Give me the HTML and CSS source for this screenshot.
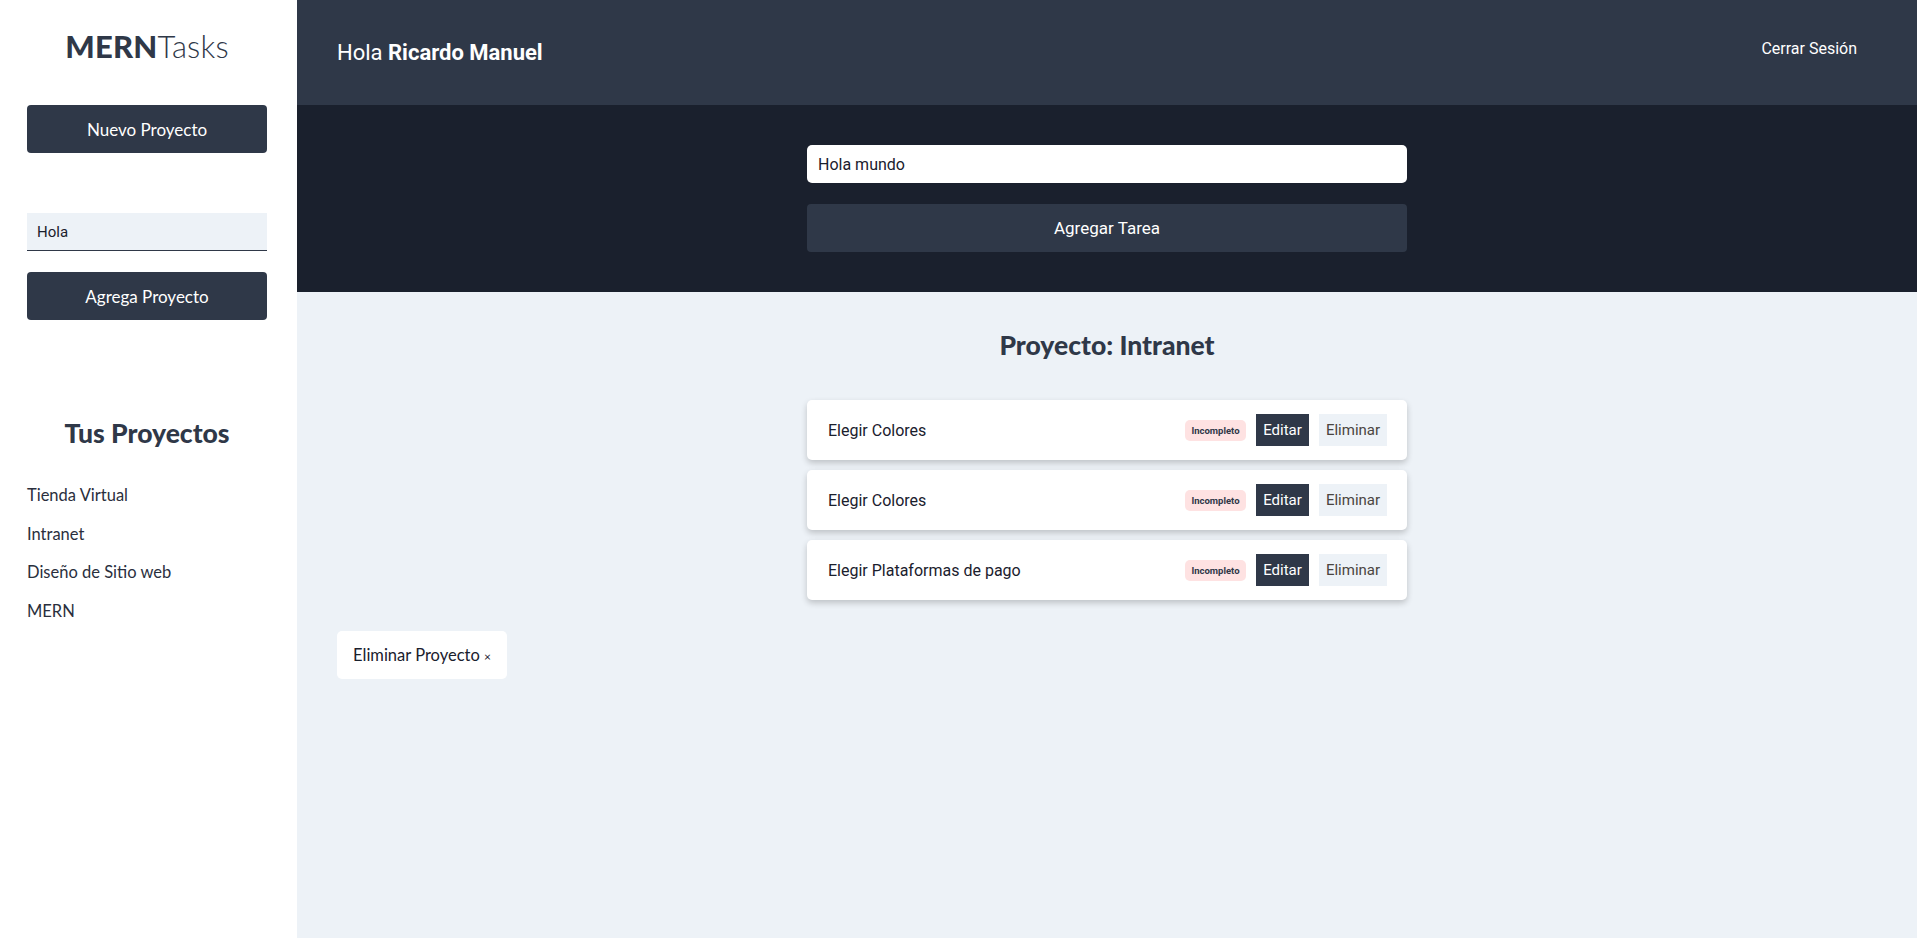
FILE: index.html
```html
<!DOCTYPE html>
<html lang="es">
<head>
<meta charset="utf-8">
<title>MERNTasks</title>
<link rel="stylesheet" href="styles.css">
</head>
<body>
<div class="app">
  <aside class="sidebar">
    <h1 class="logo"><span class="logo-bold">MERN</span>Tasks</h1>
    <button class="btn-primary">Nuevo Proyecto</button>
    <form class="new-project">
      <input class="input-text" type="text" value="Hola">
      <button class="btn-primary" type="button">Agrega Proyecto</button>
    </form>
    <div class="projects">
      <h2 class="projects-title">Tus Proyectos</h2>
      <ul class="project-list">
        <li>Tienda Virtual</li>
        <li>Intranet</li>
        <li>Diseño de Sitio web</li>
        <li>MERN</li>
      </ul>
    </div>
  </aside>
  <div class="main">
    <header class="topbar">
      <p class="greeting">Hola <strong>Ricardo Manuel</strong></p>
      <nav class="nav"><a class="logout">Cerrar Sesión</a></nav>
    </header>
    <section class="task-form">
      <div class="task-form-inner">
        <input class="task-input" type="text" value="Hola mundo">
        <button class="btn-task" type="button">Agregar Tarea</button>
      </div>
    </section>
    <section class="tasks">
      <h2 class="tasks-title">Proyecto: Intranet</h2>
      <ul class="task-list">
        <li class="task">
          <p class="task-name">Elegir Colores</p>
          <div class="task-actions">
            <span class="badge">Incompleto</span>
            <button class="btn-edit">Editar</button>
            <button class="btn-delete">Eliminar</button>
          </div>
        </li>
        <li class="task">
          <p class="task-name">Elegir Colores</p>
          <div class="task-actions">
            <span class="badge">Incompleto</span>
            <button class="btn-edit">Editar</button>
            <button class="btn-delete">Eliminar</button>
          </div>
        </li>
        <li class="task">
          <p class="task-name">Elegir Plataformas de pago</p>
          <div class="task-actions">
            <span class="badge">Incompleto</span>
            <button class="btn-edit">Editar</button>
            <button class="btn-delete">Eliminar</button>
          </div>
        </li>
      </ul>
      <button class="btn-remove-project">Eliminar Proyecto <span class="times">×</span></button>
    </section>
  </div>
</div>
</body>
</html>
```

FILE: styles.css
```css
* { box-sizing: border-box; }
html, body { margin: 0; padding: 0; }
body {
  font-family: "Roboto", "Liberation Sans", sans-serif;
  color: #2f3848;
  background: #edf2f7;
}
.app {
  display: flex;
  min-height: 100vh;
}
.sidebar {
  width: 297px;
  flex: 0 0 297px;
  background: #fff;
  padding: 0 30px 0 27px;
  font-family: "Lato", "Open Sans", sans-serif;
}
.logo {
  margin: 27px 0 40px;
  font-size: 31px;
  line-height: 38px;
  font-weight: 300;
  text-align: center;
  color: #2f3848;
  letter-spacing: 0.2px;
}
.logo-bold { font-weight: 900; }
.btn-primary {
  display: block;
  width: 100%;
  height: 48px;
  border: none;
  border-radius: 4px;
  background: #2f3848;
  color: #fff;
  font-family: "Lato", "Open Sans", sans-serif;
  font-size: 17px;
  cursor: pointer;
}
.new-project {
  margin-top: 60px;
  display: flex;
  flex-direction: column;
  gap: 21px;
}
.input-text {
  width: 100%;
  height: 38px;
  border: none;
  border-bottom: 1.5px solid #2f3848;
  background: #edf2f7;
  padding: 0 10px;
  font-family: "Roboto", sans-serif;
  font-size: 15px;
  color: #1a202d;
  outline: none;
}
.projects { margin-top: 98px; }
.projects-title {
  margin: 0 0 28px;
  text-align: center;
  font-size: 26.5px;
  line-height: 30px;
  font-weight: 900;
  color: #2f3848;
}
.project-list {
  list-style: none;
  margin: 0;
  padding: 0;
}
.project-list li {
  font-size: 16.5px;
  line-height: 24px;
  padding: 7px 0 7.5px;
  color: #2a2f3d;
  font-weight: 400;
}
.main {
  flex: 1;
  display: flex;
  flex-direction: column;
}
.topbar {
  height: 105px;
  background: #2f3848;
  display: flex;
  align-items: center;
  justify-content: space-between;
  padding: 0 60px 0 40px;
  color: #fff;
}
.greeting {
  margin: 0;
  font-size: 22px;
}
.greeting strong { font-weight: 700; }
.logout {
  display: block;
  font-size: 16px;
  color: #fff;
  margin-bottom: 9px;
}
.task-form {
  background: #1a202d;
  padding: 40px 0;
}
.task-form-inner {
  width: 600px;
  margin: 0 auto;
  display: flex;
  flex-direction: column;
  gap: 21px;
}
.task-input {
  height: 38px;
  border: none;
  border-radius: 5px;
  padding: 0 11px;
  font-family: "Roboto", sans-serif;
  font-size: 16px;
  color: #1a202d;
  background: #fff;
}
.btn-task {
  height: 48px;
  border: none;
  border-radius: 4px;
  background: #2f3848;
  color: #fff;
  font-family: "Roboto", sans-serif;
  font-size: 17px;
}
.tasks {
  padding: 39px 40px 40px;
}
.tasks-title {
  margin: 0 0 40px;
  text-align: center;
  font-family: "Lato", "Open Sans", sans-serif;
  font-size: 26.5px;
  line-height: 29px;
  font-weight: 900;
  color: #2f3848;
}
.task-list {
  list-style: none;
  margin: 0 auto;
  padding: 0;
  width: 600px;
  display: flex;
  flex-direction: column;
  gap: 10px;
}
.task {
  height: 60px;
  background: #fff;
  border-radius: 5px;
  box-shadow: 0 3px 6px rgba(0, 0, 0, 0.2);
  display: flex;
  align-items: center;
  justify-content: space-between;
  padding: 0 20px 0 21px;
}
.task-name {
  margin: 0;
  font-size: 16px;
  color: #1a202d;
}
.task-actions {
  display: flex;
  align-items: center;
  gap: 10px;
}
.badge {
  display: inline-flex;
  align-items: center;
  justify-content: center;
  width: 61px;
  height: 21px;
  border-radius: 5px;
  background: #fee2e2;
  color: #2f3848;
  font-size: 9.5px;
  font-weight: 700;
}
.btn-edit, .btn-delete {
  height: 32px;
  border: none;
  font-family: "Roboto", sans-serif;
  font-size: 15px;
  padding: 0;
}
.btn-edit {
  width: 53px;
  background: #2f3848;
  color: #fff;
}
.btn-delete {
  width: 68px;
  background: #edf2f7;
  color: #4a4540;
}
.btn-remove-project {
  margin-top: 31px;
  height: 48px;
  width: 170px;
  border: none;
  border-radius: 5px;
  background: #fff;
  color: #1a202d;
  font-family: "Lato", "Open Sans", sans-serif;
  font-size: 16.5px;
  padding: 0;
}
.times { font-size: 12px; }
```
